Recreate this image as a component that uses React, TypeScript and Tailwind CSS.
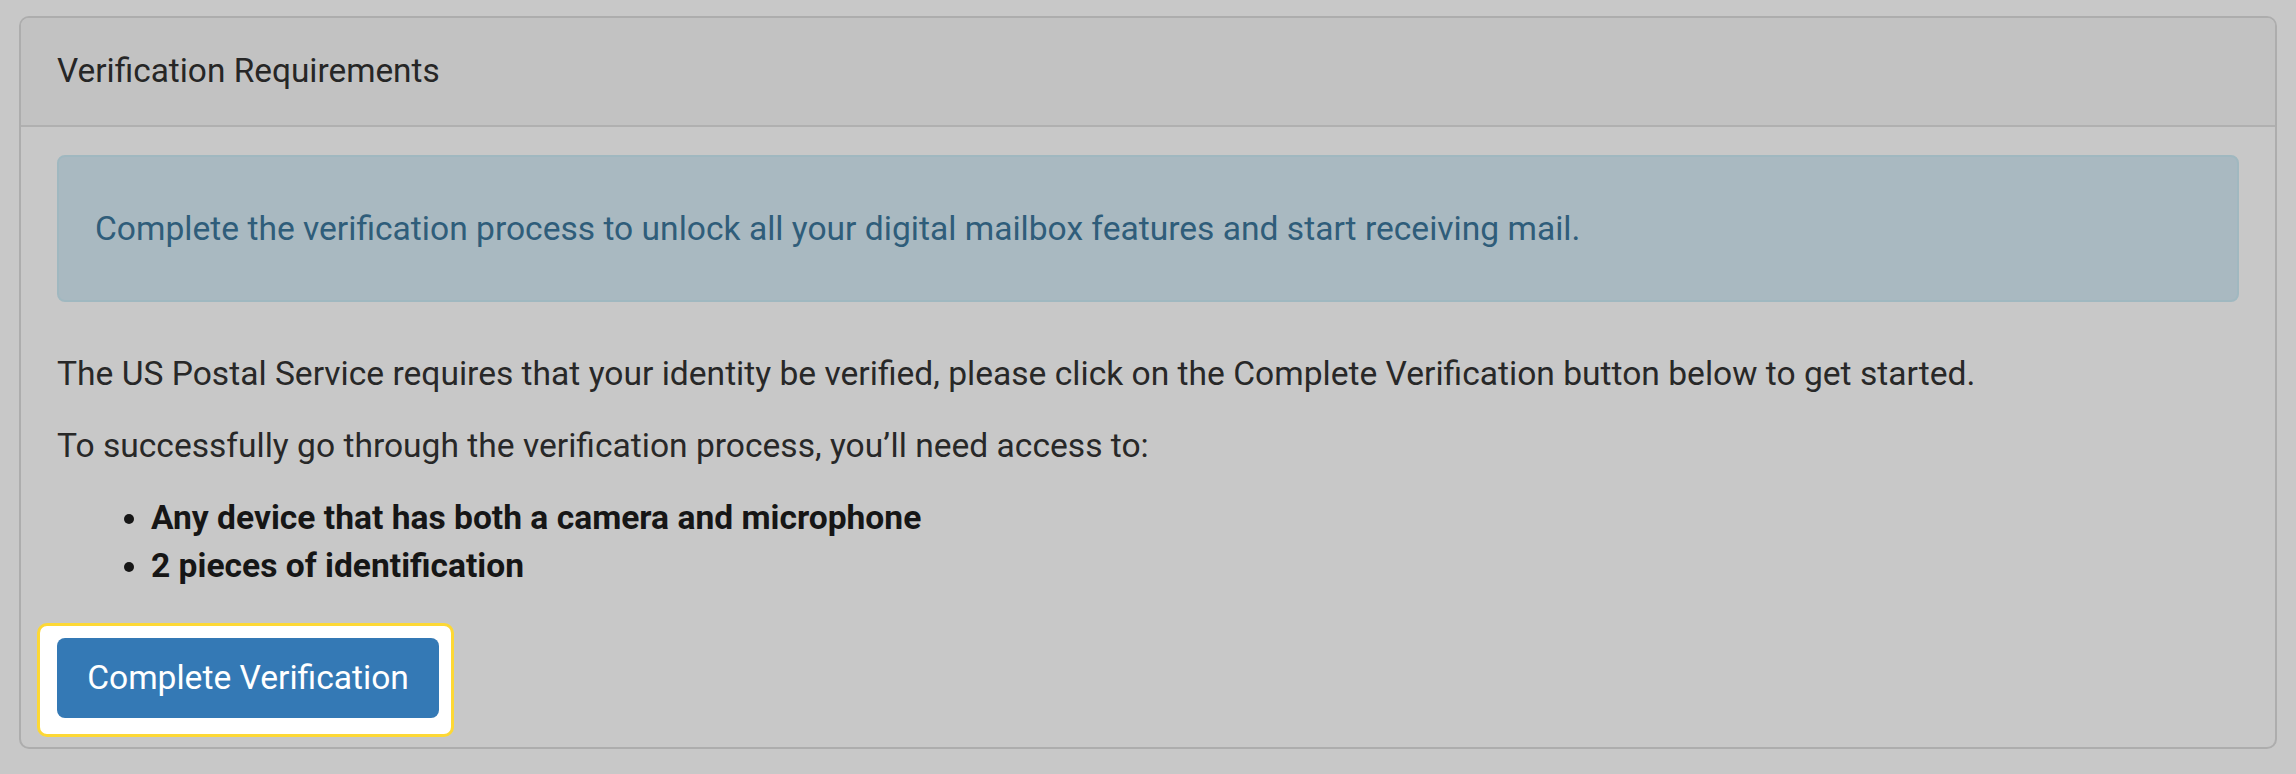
import React from "react";

export default function App() {
  return (
    <div
      className="w-[2296px] h-[774px] bg-[#c8c8c8] pt-[16px] px-[19px]"
      style={{ fontFamily: "Roboto, 'Liberation Sans', sans-serif" }}
    >
      <div className="border-2 border-[#adadad] rounded-[10px] bg-[#c8c8c8] overflow-hidden">
        <div className="h-[109px] flex items-center pl-[36px] bg-[#c2c2c2] border-b-2 border-[#b0b0b0] text-[33.4px] text-[#262626]">
          Verification Requirements
        </div>
        <div className="px-[36px] pt-[28px] pb-[29px] text-[33.6px] leading-[48px] text-[#282828]">
          <div className="h-[147px] flex items-center pl-[36px] bg-[#a9b9c1] border-2 border-[#a0b8c0] rounded-[8px] text-[#2f5d7a]">
            Complete the verification process to unlock all your digital mailbox features and start receiving mail.
          </div>
          <p className="mt-[48px]">
            The US Postal Service requires that your identity be verified, please click on the Complete Verification button below to get started.
          </p>
          <p className="mt-[24px]">
            To successfully go through the verification process, you’ll need access to:
          </p>
          <ul className="mt-[24px] list-disc pl-[94px] font-bold text-[#161616]">
            <li>Any device that has both a camera and microphone</li>
            <li>2 pieces of identification</li>
          </ul>
          <div className="mt-[48px] relative w-[382px] h-[80px]">
            <div className="absolute left-[-20px] top-[-15px] right-[-15px] bottom-[-19px] bg-white border-[3px] border-[#fdd835] rounded-[10px]" />
            <button className="relative w-[382px] h-[80px] bg-[#3479b5] rounded-[8px] text-white text-[33.6px] leading-[48px] font-normal">
              Complete Verification
            </button>
          </div>
        </div>
      </div>
    </div>
  );
}
